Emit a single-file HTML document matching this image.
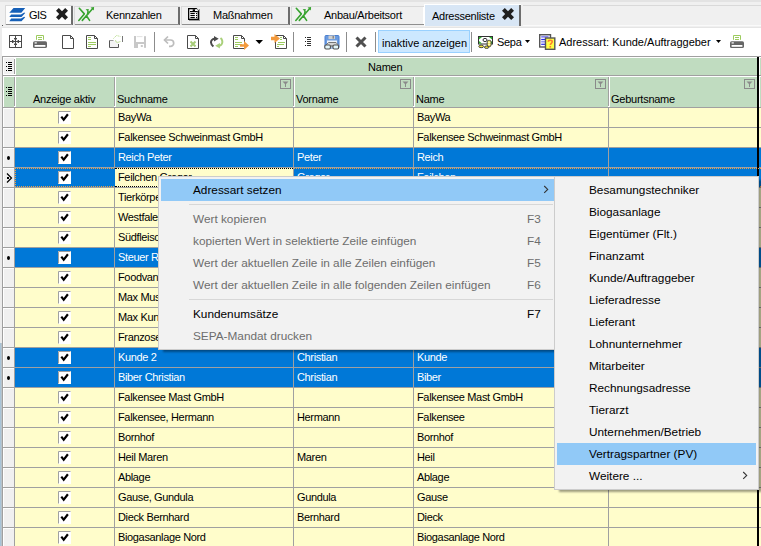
<!DOCTYPE html>
<html><head><meta charset="utf-8"><style>
html,body{margin:0;padding:0;width:761px;height:546px;overflow:hidden;background:#f0f0f0;position:relative}
.t{position:absolute;white-space:nowrap;font-family:'Liberation Sans', sans-serif;}
.r{position:absolute;}
</style></head><body>
<div class="r" style="left:0px;top:0px;width:761px;height:2px;background:#e3e3e3;"></div>
<div class="r" style="left:5px;top:5px;width:68px;height:20px;background:#fdfdfd;border-top:1px solid #d9d9d9;border-left:1px solid #d9d9d9;box-sizing:border-box"></div>
<div class="r" style="left:71px;top:6px;width:2px;height:19px;background:#6d6d6d;"></div>
<div class="r" style="left:6px;top:24px;width:66px;height:1px;background:#8f8f8f;"></div>
<div class="r" style="left:74px;top:6px;width:106px;height:19px;background:#f0f0f0;border-top:1px solid #d9d9d9;border-left:1px solid #d9d9d9;box-sizing:border-box"></div>
<div class="r" style="left:178px;top:7px;width:2px;height:18px;background:#6d6d6d;"></div>
<div class="r" style="left:75px;top:24px;width:104px;height:1px;background:#8f8f8f;"></div>
<div class="r" style="left:181px;top:6px;width:109px;height:19px;background:#f0f0f0;border-top:1px solid #d9d9d9;border-left:1px solid #d9d9d9;box-sizing:border-box"></div>
<div class="r" style="left:288px;top:7px;width:2px;height:18px;background:#6d6d6d;"></div>
<div class="r" style="left:182px;top:24px;width:107px;height:1px;background:#8f8f8f;"></div>
<div class="r" style="left:291px;top:6px;width:133px;height:19px;background:#f0f0f0;border-top:1px solid #d9d9d9;border-left:1px solid #d9d9d9;box-sizing:border-box"></div>
<div class="r" style="left:423px;top:7px;width:1px;height:18px;background:#ffffff;"></div>
<div class="r" style="left:292px;top:24px;width:132px;height:1px;background:#8f8f8f;"></div>
<div class="r" style="left:424px;top:4px;width:97px;height:22px;background:#d8e6f5;border-top:1px solid #ffffff;border-left:1px solid #ffffff;box-sizing:border-box"></div>
<div class="r" style="left:519px;top:5px;width:2px;height:21px;background:#6d6d6d;"></div>
<div class="r" style="left:523px;top:5px;width:238px;height:1px;background:#d9d9d9;"></div>
<div class="r" style="left:523px;top:25px;width:238px;height:1px;background:#fafafa;"></div>
<div class="t" style="left:29px;top:5px;font-size:11px;line-height:20px;color:#000;letter-spacing:-0.5px;">GIS</div>
<div class="t" style="left:106px;top:5px;font-size:11px;line-height:20px;color:#000;letter-spacing:-0.25px;">Kennzahlen</div>
<div class="t" style="left:213px;top:5px;font-size:11px;line-height:20px;color:#000;letter-spacing:-0.25px;">Maßnahmen</div>
<div class="t" style="left:324px;top:5px;font-size:11px;line-height:20px;color:#000;letter-spacing:-0.25px;">Anbau/Arbeitsort</div>
<div class="t" style="left:432px;top:6px;font-size:11px;line-height:20px;color:#000;letter-spacing:-0.25px;">Adressenliste</div>
<svg class="r" style="left:9px;top:8px" width="17" height="14" viewBox="0 0 17 14"><path d="M4.5,0 L16.2,0 L12.3,4.8 L0.3,4.8 Z" fill="#1660b8"/><path d="M2.2,6.4 L12,6.4 L15.2,4.5 L16.2,5 L12.5,9 L0.3,9 Z" fill="#1660b8"/><path d="M2.2,10.6 L12,10.6 L15.2,8.7 L16.2,9.2 L12.5,13.2 L0.3,13.2 Z" fill="#1660b8"/></svg>
<svg class="r" style="left:56px;top:8px" width="12" height="12" viewBox="0 0 12 12"><path d="M0,2.8 L2.8,0 L6,3.2 L9.2,0 L12,2.8 L8.8,6 L12,9.2 L9.2,12 L6,8.8 L2.8,12 L0,9.2 L3.2,6 Z" fill="#1e1e1e"/></svg>
<svg class="r" style="left:502px;top:8px" width="12" height="12" viewBox="0 0 12 12"><path d="M0,2.8 L2.8,0 L6,3.2 L9.2,0 L12,2.8 L8.8,6 L12,9.2 L9.2,12 L6,8.8 L2.8,12 L0,9.2 L3.2,6 Z" fill="#1e1e1e"/></svg>
<svg class="r" style="left:76px;top:5px" width="20" height="18" viewBox="0 0 20 18"><g stroke="#37a32f" stroke-width="1.6" fill="none" stroke-linecap="round" stroke-linejoin="round"><path d="M3.3,3.3 L8.3,8.9 L2.8,15.4"/><path d="M6.3,15.4 L10.4,10.7 L13.6,15.4"/><path d="M10.4,10.7 L16.3,4"/><path d="M11.6,9.2 L12,6.5"/></g><path d="M14.6,2.4 L18.1,2.1 L17.8,5.6 Z" fill="#37a32f"/><path d="M9.6,4.3 L12.8,4.1 L12.2,7.1 Z" fill="#37a32f"/></svg>
<svg class="r" style="left:293px;top:5px" width="20" height="18" viewBox="0 0 20 18"><g stroke="#37a32f" stroke-width="1.6" fill="none" stroke-linecap="round" stroke-linejoin="round"><path d="M3.3,3.3 L8.3,8.9 L2.8,15.4"/><path d="M6.3,15.4 L10.4,10.7 L13.6,15.4"/><path d="M10.4,10.7 L16.3,4"/><path d="M11.6,9.2 L12,6.5"/></g><path d="M14.6,2.4 L18.1,2.1 L17.8,5.6 Z" fill="#37a32f"/><path d="M9.6,4.3 L12.8,4.1 L12.2,7.1 Z" fill="#37a32f"/></svg>
<svg class="r" style="left:188px;top:8px" width="13" height="14" viewBox="0 0 13 14"><rect x="11" y="1" width="1" height="12" fill="#9a9a9a"/><rect x="1" y="12" width="11" height="1" fill="#9a9a9a"/><path d="M0,0 H8.5 L11,2.5 V12 H0 Z" fill="#000"/><rect x="1.3" y="1.3" width="8.4" height="9.4" fill="#fff"/><rect x="2" y="3" width="7.7" height="1.2" fill="#000"/><rect x="4.7" y="1.3" width="2.3" height="1.8" fill="#000"/><path d="M7.6,1.3 H8.5 L9.7,2.5 V3 H7.6 Z" fill="#fff"/><rect x="2.4" y="5" width="4.4" height="1.1" fill="#000"/><rect x="2.4" y="7" width="4.4" height="1.1" fill="#000"/><rect x="2.4" y="9" width="4.4" height="1.1" fill="#000"/><rect x="8" y="5" width="1.1" height="1.1" fill="#000"/><rect x="8" y="7" width="1.1" height="1.1" fill="#000"/><rect x="8" y="9" width="1.1" height="1.1" fill="#000"/></svg>
<div class="r" style="left:0px;top:26px;width:761px;height:1px;background:#f0f0f0;"></div>
<div class="r" style="left:2px;top:25px;width:1px;height:1px;background:#555;"></div>
<div class="r" style="left:2px;top:27px;width:759px;height:1px;background:#e5e5e5;"></div>
<div class="r" style="left:2px;top:28px;width:759px;height:28px;background:#ffffff;"></div>
<div class="r" style="left:154px;top:32px;width:1px;height:20px;background:#8c8c8c;"></div>
<div class="r" style="left:293px;top:32px;width:1px;height:20px;background:#8c8c8c;"></div>
<div class="r" style="left:346px;top:32px;width:1px;height:20px;background:#8c8c8c;"></div>
<div class="r" style="left:375px;top:32px;width:1px;height:20px;background:#8c8c8c;"></div>
<div class="r" style="left:471px;top:32px;width:1px;height:20px;background:#8c8c8c;"></div>
<svg class="r" style="left:9px;top:35px" width="13" height="13" viewBox="0 0 13 13"><g stroke="#4a4a4a" fill="none" stroke-width="1"><rect x="0.5" y="0.5" width="12" height="12"/><path d="M6.5,1 V12 M1,6.5 H12"/></g><g fill="#4a4a4a"><rect x="5" y="3" width="3" height="1.4"/><rect x="5" y="8.6" width="3" height="1.4"/><rect x="3" y="5" width="1.4" height="3"/><rect x="8.6" y="5" width="1.4" height="3"/></g></svg>
<svg class="r" style="left:33px;top:35px" width="15" height="14" viewBox="0 0 15 14"><path d="M3.5,4.8 V0.5 H10.5 V4.8" stroke="#9ccb5e" fill="none"/><path d="M5,2.5 H9 M5,4.5 H9" stroke="#9ccb5e"/><rect x="0" y="6.2" width="14" height="6.8" rx="1.6" fill="#666"/><rect x="1.6" y="10" width="10.8" height="1.8" fill="#fff"/><rect x="1.6" y="7.3" width="2.2" height="1.2" fill="#fff"/></svg>
<svg class="r" style="left:730px;top:35px" width="15" height="14" viewBox="0 0 15 14"><path d="M3.5,4.8 V0.5 H10.5 V4.8" stroke="#9ccb5e" fill="none"/><path d="M5,2.5 H9 M5,4.5 H9" stroke="#9ccb5e"/><rect x="0" y="6.2" width="14" height="6.8" rx="1.6" fill="#666"/><rect x="1.6" y="10" width="10.8" height="1.8" fill="#fff"/><rect x="1.6" y="7.3" width="2.2" height="1.2" fill="#fff"/></svg>
<svg class="r" style="left:62px;top:35px" width="13" height="15" viewBox="0 0 13 15"><path d="M0.5,0.5 H8.5 L11.5,3.5 V13.5 H0.5 Z M8.5,0.5 V3.5 H11.5" stroke="#4a4a4a" fill="#fff" stroke-width="1"/></svg>
<svg class="r" style="left:86px;top:35px" width="13" height="15" viewBox="0 0 13 15"><path d="M0.5,0.5 H8.5 L11.5,3.5 V13.5 H0.5 Z M8.5,0.5 V3.5 H11.5" stroke="#4a4a4a" fill="#fff" stroke-width="1"/><path d="M2,2.5 H5 M2,4.5 H5 M2,7.5 H10 M2,9.5 H10 M2,11.5 H5" stroke="#9ccb5e"/></svg>
<svg class="r" style="left:109px;top:35px" width="15" height="14" viewBox="0 0 15 14"><rect x="1" y="6" width="8.5" height="6.5" fill="#f3f3f3"/><path d="M0.5,5.5 H4.5" stroke="#9a9a9a"/><path d="M0.5,5.5 V12.5 H9.5 V9" stroke="#555" fill="none"/><path d="M4.5,3.5 L7.5,0.5 L11.5,1.5" stroke="#b6db88" fill="none" stroke-dasharray="1.2 0.8"/><path d="M6.5,5 Q6.5,7.5 8.5,7.5 L11.5,6.5" stroke="#c5e3a0" fill="none"/><path d="M13.5,1 V7" stroke="#777"/></svg>
<svg class="r" style="left:134px;top:36px" width="12" height="12" viewBox="0 0 12 12"><g fill="#c8c8c8"><rect x="0" y="0" width="2" height="12"/><rect x="10" y="0" width="2" height="12" rx="0.8"/><rect x="0" y="6" width="12" height="2"/><rect x="0" y="8" width="4" height="4"/><rect x="6.8" y="9" width="2" height="2"/></g><rect x="2.7" y="0.2" width="5.8" height="0.9" fill="#dedede"/></svg>
<svg class="r" style="left:163px;top:35px" width="13" height="13" viewBox="0 0 13 13"><path d="M1.5,5 H7.5 A3.2,3.2 0 0 1 7.5,11.4 H6" stroke="#bdbdbd" stroke-width="1.7" fill="none"/><path d="M5,1.5 L1.5,5 L5,8.5" stroke="#bdbdbd" stroke-width="1.7" fill="none"/></svg>
<svg class="r" style="left:187px;top:35px" width="13" height="15" viewBox="0 0 13 15"><path d="M0.5,0.5 H8.5 L11.5,3.5 V13.5 H0.5 Z M8.5,0.5 V3.5 H11.5" stroke="#4a4a4a" fill="#fff"/><path d="M3.5,6.5 L8.5,11.5 M8.5,6.5 L3.5,11.5" stroke="#a7cc78" stroke-width="2"/></svg>
<svg class="r" style="left:210px;top:35px" width="14" height="14" viewBox="0 0 14 14"><path d="M5,3.7 C2.5,3.7 0.9,5.5 1,7.5 C1.1,9.5 2.3,10.6 3.4,11.6" stroke="#4a4a4a" stroke-width="2" fill="none"/><path d="M4,1 L8.7,3.7 L4,6.5 Z" fill="#4a4a4a"/><path d="M10.5,3 C12.5,4.5 13,7.5 11.5,9.5 C11,10.2 10,10.7 9,10.7" stroke="#a9d07a" stroke-width="2" fill="none"/><path d="M9.9,8 L5.2,10.7 L9.9,13.5 Z" fill="#a9d07a"/></svg>
<svg class="r" style="left:233px;top:35px" width="17" height="16" viewBox="0 0 17 16"><path d="M0.5,0.5 H8.5 L11.5,3.5 V13.5 H0.5 Z M8.5,0.5 V3.5 H11.5" stroke="#4a4a4a" fill="#fff"/><path d="M2,2.5 H5 M2,4.5 H5 M2,7.5 H9 M2,9.5 H9 M2,11.5 H5" stroke="#9ccb5e"/><path d="M7,9.2 H11 V6 L16,10.5 L11,15 V11.8 H7 Z" fill="#f39a3c"/></svg>
<svg class="r" style="left:255px;top:40px" width="9" height="5" viewBox="0 0 9 5"><path d="M0.5,0 L8,0 L4.25,4 Z" fill="#000"/></svg>
<svg class="r" style="left:270px;top:33px" width="18" height="17" viewBox="0 0 18 17"><path d="M5.5,2.5 H13.5 L16.5,5.5 V15.5 H5.5 Z M13.5,2.5 V5.5 H16.5" stroke="#4a4a4a" fill="#fff"/><path d="M10,4.5 H12 M10,6.5 H12 M8,9.5 H15 M7,11.5 H14 M7,13.5 H9" stroke="#9ccb5e"/><path d="M1,3.8 H4.5 V1 L10,5.5 L4.5,10 V7.2 H1 Z" fill="#f39a3c"/></svg>
<svg class="r" style="left:305px;top:37px" width="7" height="10" viewBox="0 0 7 10"><path d="M0,0.5 H1 M0,4.5 H1 M0,8.5 H1" stroke="#222"/><path d="M2,0.5 H6 M2,2.5 H6 M2,4.5 H6 M2,6.5 H6 M2,8.5 H6" stroke="#333"/></svg>
<svg class="r" style="left:324px;top:35px" width="16" height="15" viewBox="0 0 16 15"><rect x="1" y="0.5" width="14" height="12.5" rx="1" fill="#6a9be0" stroke="#4a7fcf"/><rect x="4.5" y="0.5" width="6.5" height="3.6" fill="#cfcfcf"/><rect x="8.5" y="1" width="1.5" height="2.6" fill="#888"/><rect x="3" y="5.5" width="10" height="7" fill="#f0f4fa"/><path d="M1.5,10.5 L4.5,7.5 H12 L14.8,10.5" stroke="#777" fill="#d5d5d5"/><rect x="0.8" y="10" width="5.6" height="4" rx="1.2" fill="#e3f6fa" stroke="#505050" stroke-width="1.1"/><rect x="9" y="10" width="5.6" height="4" rx="1.2" fill="#e3f6fa" stroke="#505050" stroke-width="1.1"/><path d="M6.4,11 H9" stroke="#505050" stroke-width="1.1"/></svg>
<svg class="r" style="left:355px;top:36px" width="12" height="12" viewBox="0 0 12 12"><path d="M1.5,1.5 L10.5,10.5 M10.5,1.5 L1.5,10.5" stroke="#505050" stroke-width="3"/></svg>
<div class="r" style="left:378px;top:30px;width:92px;height:23px;background:#cce8ff;border:1px solid #99d1ff;box-sizing:border-box"></div>
<div class="t" style="left:382px;top:33px;font-size:11px;line-height:20px;color:#000;letter-spacing:0px;">inaktive anzeigen</div>
<svg class="r" style="left:477px;top:35px" width="17" height="14" viewBox="0 0 17 14"><rect x="1.5" y="1.5" width="14" height="7.5" fill="#fff" stroke="#333"/><path d="M2,2 H5 L2,4.5 Z M15,2 H12 L15,4.5 Z M2,8.5 H5 L2,6 Z M15,8.5 H12 L15,6 Z" fill="#2db52d"/><ellipse cx="8" cy="5" rx="2" ry="1.6" fill="#fff" stroke="#333"/><rect x="10.2" y="5.3" width="3.8" height="6.4" rx="1.6" fill="#f2e640" stroke="#333" stroke-width="0.9"/><path d="M10.8,7.3 H13.4 M10.8,9.3 H13.4" stroke="#fff" stroke-width="0.8"/><ellipse cx="4.2" cy="11.4" rx="2.4" ry="1.3" fill="#f2e640" stroke="#333" stroke-width="0.9"/><ellipse cx="9.6" cy="12.2" rx="2.2" ry="1.2" fill="#f2e640" stroke="#333" stroke-width="0.9"/></svg>
<div class="t" style="left:497px;top:32px;font-size:11px;line-height:20px;color:#000;letter-spacing:-0.3px;">Sepa</div>
<svg class="r" style="left:525px;top:40px" width="6" height="4" viewBox="0 0 6 4"><path d="M0,0 L5,0 L2.5,3 Z" fill="#000"/></svg>
<svg class="r" style="left:539px;top:34px" width="17" height="16" viewBox="0 0 17 16"><rect x="0.7" y="0.7" width="10.8" height="12.3" fill="#fafaff" stroke="#555" stroke-width="1.4"/><path d="M2.2,2.8 H9.5" stroke="#8888f0" stroke-width="1.8"/><path d="M2.2,5.5 H8" stroke="#2a2af0" stroke-width="1.2"/><path d="M2.2,7.8 H8" stroke="#8888f0" stroke-width="1.4"/><path d="M2.2,10.3 H8" stroke="#2a2af0" stroke-width="1.2"/><rect x="6.5" y="4" width="9.3" height="11.3" fill="#ffff44" stroke="#555" stroke-width="1.4"/><path d="M9.3,7.8 C9.3,5.8 13.2,5.8 13.2,7.8 C13.2,9.2 11.3,9.4 11.3,11" stroke="#ff7a30" stroke-width="1.6" fill="none"/><rect x="10.5" y="12" width="1.6" height="1.6" fill="#ff7a30"/></svg>
<div class="t" style="left:559px;top:32px;font-size:11px;line-height:20px;color:#000;letter-spacing:0px;">Adressart: Kunde/Auftraggeber</div>
<svg class="r" style="left:716px;top:40px" width="6" height="4" viewBox="0 0 6 4"><path d="M0,0 L5,0 L2.5,3 Z" fill="#000"/></svg>
<div class="r" style="left:0px;top:27px;width:2px;height:519px;background:#ececec;"></div>
<div class="r" style="left:0px;top:343px;width:1px;height:203px;background:#a8c4d8;"></div>
<div class="r" style="left:1px;top:343px;width:1px;height:203px;background:#b9c3ca;"></div>
<div class="r" style="left:2px;top:56px;width:759px;height:490px;background:#a0a0a0;"></div>
<div class="r" style="left:3px;top:57px;width:758px;height:1px;background:#fff;"></div>
<div class="r" style="left:3px;top:58px;width:1px;height:17px;background:#fff;"></div>
<div class="r" style="left:4px;top:58px;width:10px;height:16px;background:#f0f0f0;"></div>
<div class="r" style="left:4px;top:74px;width:11px;height:1px;background:#fff;"></div>
<div class="r" style="left:14px;top:58px;width:1px;height:1px;background:#fff;"></div>
<div class="r" style="left:14px;top:59px;width:1px;height:15px;background:#a0a0a0;"></div>
<div class="r" style="left:15px;top:58px;width:1px;height:17px;background:#fff;"></div>
<div class="r" style="left:16px;top:58px;width:741px;height:17px;background:#c0dcc0;"></div>
<div class="r" style="left:759px;top:58px;width:2px;height:17px;background:#c0dcc0;border-left:1px solid #fff;box-sizing:border-box"></div>
<div class="t" style="left:368px;top:57px;font-size:11px;line-height:20px;color:#000;letter-spacing:-0.2px;">Namen</div>
<svg class="r" style="left:6px;top:62px" width="7" height="9" viewBox="0 0 7 9"><path d="M0,0.5 H1 M0,4.5 H1 M0,8.5 H1" stroke="#000"/><path d="M2,0.5 H6 M2,2.5 H6 M2,4.5 H6 M2,6.5 H6 M2,8.5 H6" stroke="#000"/></svg>
<div class="r" style="left:3px;top:76px;width:758px;height:1px;background:#fff;"></div>
<div class="r" style="left:3px;top:77px;width:1px;height:30px;background:#fff;"></div>
<div class="r" style="left:4px;top:77px;width:10px;height:30px;background:#c0dcc0;"></div>
<div class="r" style="left:15px;top:77px;width:1px;height:30px;background:#fff;"></div>
<div class="r" style="left:16px;top:77px;width:98px;height:30px;background:#c0dcc0;"></div>
<div class="r" style="left:115px;top:77px;width:1px;height:30px;background:#fff;"></div>
<div class="r" style="left:116px;top:77px;width:177px;height:30px;background:#c0dcc0;"></div>
<div class="r" style="left:294px;top:77px;width:1px;height:30px;background:#fff;"></div>
<div class="r" style="left:295px;top:77px;width:118px;height:30px;background:#c0dcc0;"></div>
<div class="r" style="left:414px;top:77px;width:1px;height:30px;background:#fff;"></div>
<div class="r" style="left:415px;top:77px;width:193px;height:30px;background:#c0dcc0;"></div>
<div class="r" style="left:609px;top:77px;width:1px;height:30px;background:#fff;"></div>
<div class="r" style="left:610px;top:77px;width:147px;height:30px;background:#c0dcc0;"></div>
<div class="r" style="left:757px;top:57px;width:2px;height:489px;background:#000;"></div>
<div class="r" style="left:759px;top:77px;width:1px;height:30px;background:#fff;"></div>
<div class="r" style="left:760px;top:77px;width:1px;height:30px;background:#c0dcc0;"></div>
<svg class="r" style="left:6px;top:87px" width="7" height="9" viewBox="0 0 7 9"><path d="M0,0.5 H1 M0,4.5 H1 M0,8.5 H1" stroke="#000"/><path d="M2,0.5 H6 M2,2.5 H6 M2,4.5 H6 M2,6.5 H6 M2,8.5 H6" stroke="#000"/></svg>
<div class="r" style="left:14px;top:106px;width:1px;height:1px;background:#fff;"></div>
<div class="r" style="left:114px;top:106px;width:1px;height:1px;background:#fff;"></div>
<div class="r" style="left:293px;top:106px;width:1px;height:1px;background:#fff;"></div>
<div class="r" style="left:413px;top:106px;width:1px;height:1px;background:#fff;"></div>
<div class="r" style="left:608px;top:106px;width:1px;height:1px;background:#fff;"></div>
<div class="t" style="left:33px;top:89px;font-size:11px;line-height:20px;color:#000;letter-spacing:-0.25px;">Anzeige aktiv</div>
<div class="t" style="left:117px;top:89px;font-size:11px;line-height:20px;color:#000;letter-spacing:-0.25px;">Suchname</div>
<div class="t" style="left:296px;top:89px;font-size:11px;line-height:20px;color:#000;letter-spacing:-0.25px;">Vorname</div>
<div class="t" style="left:416px;top:89px;font-size:11px;line-height:20px;color:#000;letter-spacing:-0.25px;">Name</div>
<div class="t" style="left:611px;top:89px;font-size:11px;line-height:20px;color:#000;letter-spacing:-0.25px;">Geburtsname</div>
<svg class="r" style="left:280px;top:79px" width="11" height="10" viewBox="0 0 11 10"><rect x="0.5" y="0.5" width="10" height="9" fill="none" stroke="#8a8a8a"/><path d="M2.5,2.5 H8.5 L6,5 V8 H5 V5 Z" fill="#8a8a8a"/></svg>
<svg class="r" style="left:400px;top:79px" width="11" height="10" viewBox="0 0 11 10"><rect x="0.5" y="0.5" width="10" height="9" fill="none" stroke="#8a8a8a"/><path d="M2.5,2.5 H8.5 L6,5 V8 H5 V5 Z" fill="#8a8a8a"/></svg>
<svg class="r" style="left:595px;top:79px" width="11" height="10" viewBox="0 0 11 10"><rect x="0.5" y="0.5" width="10" height="9" fill="none" stroke="#8a8a8a"/><path d="M2.5,2.5 H8.5 L6,5 V8 H5 V5 Z" fill="#8a8a8a"/></svg>
<svg class="r" style="left:744px;top:79px" width="11" height="10" viewBox="0 0 11 10"><rect x="0.5" y="0.5" width="10" height="9" fill="none" stroke="#8a8a8a"/><path d="M2.5,2.5 H8.5 L6,5 V8 H5 V5 Z" fill="#8a8a8a"/></svg>
<div class="r" style="left:3px;top:108px;width:1px;height:19px;background:#fff;"></div>
<div class="r" style="left:4px;top:108px;width:10px;height:19px;background:#f0f0f0;"></div>
<div class="r" style="left:4px;top:108px;width:10px;height:1px;background:#fff;"></div>
<div class="r" style="left:15px;top:108px;width:99px;height:19px;background:#fffdcb;"></div>
<div class="r" style="left:115px;top:108px;width:178px;height:19px;background:#fffdcb;"></div>
<div class="r" style="left:294px;top:108px;width:119px;height:19px;background:#fffdcb;"></div>
<div class="r" style="left:414px;top:108px;width:194px;height:19px;background:#fffdcb;"></div>
<div class="r" style="left:609px;top:108px;width:148px;height:19px;background:#fffdcb;"></div>
<div class="r" style="left:759px;top:108px;width:2px;height:19px;background:#fffdcb;"></div>
<svg class="r" style="left:58px;top:111px" width="13" height="13" viewBox="0 0 13 13"><rect x="0" y="0" width="13" height="13" fill="#fff"/><path d="M0.5,12.5 V0.5 H12.5" stroke="#a0a0a0" fill="none"/><path d="M3.3,5.6 L5.7,8.7 L9.9,3.3" stroke="#000" stroke-width="2.2" fill="none"/></svg>
<div class="t" style="left:118px;top:107px;font-size:11px;line-height:20px;color:#000;letter-spacing:-0.35px;">BayWa</div>
<div class="t" style="left:297px;top:107px;font-size:11px;line-height:20px;color:#000;letter-spacing:-0.35px;"></div>
<div class="t" style="left:417px;top:107px;font-size:11px;line-height:20px;color:#000;letter-spacing:-0.35px;">BayWa</div>
<div class="r" style="left:3px;top:128px;width:1px;height:19px;background:#fff;"></div>
<div class="r" style="left:4px;top:128px;width:10px;height:19px;background:#f0f0f0;"></div>
<div class="r" style="left:4px;top:128px;width:10px;height:1px;background:#fff;"></div>
<div class="r" style="left:15px;top:128px;width:99px;height:19px;background:#fffdcb;"></div>
<div class="r" style="left:115px;top:128px;width:178px;height:19px;background:#fffdcb;"></div>
<div class="r" style="left:294px;top:128px;width:119px;height:19px;background:#fffdcb;"></div>
<div class="r" style="left:414px;top:128px;width:194px;height:19px;background:#fffdcb;"></div>
<div class="r" style="left:609px;top:128px;width:148px;height:19px;background:#fffdcb;"></div>
<div class="r" style="left:759px;top:128px;width:2px;height:19px;background:#fffdcb;"></div>
<svg class="r" style="left:58px;top:131px" width="13" height="13" viewBox="0 0 13 13"><rect x="0" y="0" width="13" height="13" fill="#fff"/><path d="M0.5,12.5 V0.5 H12.5" stroke="#a0a0a0" fill="none"/><path d="M3.3,5.6 L5.7,8.7 L9.9,3.3" stroke="#000" stroke-width="2.2" fill="none"/></svg>
<div class="t" style="left:118px;top:127px;font-size:11px;line-height:20px;color:#000;letter-spacing:-0.35px;">Falkensee Schweinmast GmbH</div>
<div class="t" style="left:297px;top:127px;font-size:11px;line-height:20px;color:#000;letter-spacing:-0.35px;"></div>
<div class="t" style="left:417px;top:127px;font-size:11px;line-height:20px;color:#000;letter-spacing:-0.35px;">Falkensee Schweinmast GmbH</div>
<div class="r" style="left:3px;top:148px;width:1px;height:19px;background:#fff;"></div>
<div class="r" style="left:4px;top:148px;width:10px;height:19px;background:#f0f0f0;"></div>
<div class="r" style="left:4px;top:148px;width:10px;height:1px;background:#fff;"></div>
<div class="r" style="left:15px;top:148px;width:99px;height:19px;background:#0078d7;"></div>
<div class="r" style="left:115px;top:148px;width:178px;height:19px;background:#0078d7;"></div>
<div class="r" style="left:294px;top:148px;width:119px;height:19px;background:#0078d7;"></div>
<div class="r" style="left:414px;top:148px;width:194px;height:19px;background:#0078d7;"></div>
<div class="r" style="left:609px;top:148px;width:148px;height:19px;background:#0078d7;"></div>
<div class="r" style="left:759px;top:148px;width:2px;height:19px;background:#0078d7;"></div>
<svg class="r" style="left:58px;top:151px" width="13" height="13" viewBox="0 0 13 13"><rect x="0" y="0" width="13" height="13" fill="#fff"/><path d="M0.5,12.5 V0.5 H12.5" stroke="#a0a0a0" fill="none"/><path d="M3.3,5.6 L5.7,8.7 L9.9,3.3" stroke="#000" stroke-width="2.2" fill="none"/></svg>
<div class="t" style="left:118px;top:147px;font-size:11px;line-height:20px;color:#fff;letter-spacing:-0.35px;">Reich Peter</div>
<div class="t" style="left:297px;top:147px;font-size:11px;line-height:20px;color:#fff;letter-spacing:-0.35px;">Peter</div>
<div class="t" style="left:417px;top:147px;font-size:11px;line-height:20px;color:#fff;letter-spacing:-0.35px;">Reich</div>
<svg class="r" style="left:7px;top:155px" width="3" height="6" viewBox="0 0 3 6"><ellipse cx="1.5" cy="3" rx="1.5" ry="2.1" fill="#000"/></svg>
<div class="r" style="left:3px;top:168px;width:1px;height:19px;background:#fff;"></div>
<div class="r" style="left:4px;top:168px;width:10px;height:19px;background:#f0f0f0;"></div>
<div class="r" style="left:4px;top:168px;width:10px;height:1px;background:#fff;"></div>
<div class="r" style="left:15px;top:168px;width:99px;height:19px;background:#0078d7;"></div>
<div class="r" style="left:115px;top:168px;width:178px;height:19px;background:#fffdcb;"></div>
<div class="r" style="left:294px;top:168px;width:119px;height:19px;background:#0078d7;"></div>
<div class="r" style="left:414px;top:168px;width:194px;height:19px;background:#0078d7;"></div>
<div class="r" style="left:609px;top:168px;width:148px;height:19px;background:#0078d7;"></div>
<div class="r" style="left:759px;top:168px;width:2px;height:19px;background:#0078d7;"></div>
<div class="r" style="left:114px;top:168px;width:1px;height:19px;background:#0078d7;"></div>
<div class="r" style="left:15px;top:168px;width:99px;height:19px;border-top:1px dotted #f0a040;border-bottom:1px dotted #f0a040;border-left:1px dotted #f0a040;box-sizing:border-box"></div>
<div class="r" style="left:115px;top:168px;width:178px;height:19px;border-top:1px dotted #000;border-bottom:1px dotted #000;box-sizing:border-box"></div>
<div class="r" style="left:294px;top:168px;width:467px;height:19px;border-top:1px dotted #f0a040;border-bottom:1px dotted #f0a040;box-sizing:border-box"></div>
<svg class="r" style="left:58px;top:171px" width="13" height="13" viewBox="0 0 13 13"><rect x="0" y="0" width="13" height="13" fill="#fff"/><path d="M0.5,12.5 V0.5 H12.5" stroke="#a0a0a0" fill="none"/><path d="M3.3,5.6 L5.7,8.7 L9.9,3.3" stroke="#000" stroke-width="2.2" fill="none"/></svg>
<div class="t" style="left:118px;top:167px;font-size:11px;line-height:20px;color:#000;letter-spacing:-0.35px;">Feilchen Gregor</div>
<div class="t" style="left:297px;top:167px;font-size:11px;line-height:20px;color:#fff;letter-spacing:-0.35px;">Gregor</div>
<div class="t" style="left:417px;top:167px;font-size:11px;line-height:20px;color:#fff;letter-spacing:-0.35px;">Feilchen</div>
<svg class="r" style="left:6px;top:173px" width="7" height="10" viewBox="0 0 7 10"><path d="M1,0.5 L5.5,5 L1,9.5" stroke="#000" fill="none" stroke-width="1.2"/><rect x="1" y="4" width="2" height="2" fill="#000"/></svg>
<div class="r" style="left:3px;top:188px;width:1px;height:19px;background:#fff;"></div>
<div class="r" style="left:4px;top:188px;width:10px;height:19px;background:#f0f0f0;"></div>
<div class="r" style="left:4px;top:188px;width:10px;height:1px;background:#fff;"></div>
<div class="r" style="left:15px;top:188px;width:99px;height:19px;background:#fffdcb;"></div>
<div class="r" style="left:115px;top:188px;width:178px;height:19px;background:#fffdcb;"></div>
<div class="r" style="left:294px;top:188px;width:119px;height:19px;background:#fffdcb;"></div>
<div class="r" style="left:414px;top:188px;width:194px;height:19px;background:#fffdcb;"></div>
<div class="r" style="left:609px;top:188px;width:148px;height:19px;background:#fffdcb;"></div>
<div class="r" style="left:759px;top:188px;width:2px;height:19px;background:#fffdcb;"></div>
<svg class="r" style="left:58px;top:191px" width="13" height="13" viewBox="0 0 13 13"><rect x="0" y="0" width="13" height="13" fill="#fff"/><path d="M0.5,12.5 V0.5 H12.5" stroke="#a0a0a0" fill="none"/><path d="M3.3,5.6 L5.7,8.7 L9.9,3.3" stroke="#000" stroke-width="2.2" fill="none"/></svg>
<div class="t" style="left:118px;top:187px;font-size:11px;line-height:20px;color:#000;letter-spacing:-0.35px;">Tierkörperbeseitigung</div>
<div class="t" style="left:297px;top:187px;font-size:11px;line-height:20px;color:#000;letter-spacing:-0.35px;"></div>
<div class="t" style="left:417px;top:187px;font-size:11px;line-height:20px;color:#000;letter-spacing:-0.35px;">Tierkörperbeseitigung</div>
<div class="r" style="left:3px;top:208px;width:1px;height:19px;background:#fff;"></div>
<div class="r" style="left:4px;top:208px;width:10px;height:19px;background:#f0f0f0;"></div>
<div class="r" style="left:4px;top:208px;width:10px;height:1px;background:#fff;"></div>
<div class="r" style="left:15px;top:208px;width:99px;height:19px;background:#fffdcb;"></div>
<div class="r" style="left:115px;top:208px;width:178px;height:19px;background:#fffdcb;"></div>
<div class="r" style="left:294px;top:208px;width:119px;height:19px;background:#fffdcb;"></div>
<div class="r" style="left:414px;top:208px;width:194px;height:19px;background:#fffdcb;"></div>
<div class="r" style="left:609px;top:208px;width:148px;height:19px;background:#fffdcb;"></div>
<div class="r" style="left:759px;top:208px;width:2px;height:19px;background:#fffdcb;"></div>
<svg class="r" style="left:58px;top:211px" width="13" height="13" viewBox="0 0 13 13"><rect x="0" y="0" width="13" height="13" fill="#fff"/><path d="M0.5,12.5 V0.5 H12.5" stroke="#a0a0a0" fill="none"/><path d="M3.3,5.6 L5.7,8.7 L9.9,3.3" stroke="#000" stroke-width="2.2" fill="none"/></svg>
<div class="t" style="left:118px;top:207px;font-size:11px;line-height:20px;color:#000;letter-spacing:-0.35px;">Westfalenfleisch</div>
<div class="t" style="left:297px;top:207px;font-size:11px;line-height:20px;color:#000;letter-spacing:-0.35px;"></div>
<div class="t" style="left:417px;top:207px;font-size:11px;line-height:20px;color:#000;letter-spacing:-0.35px;">Westfalenfleisch</div>
<div class="r" style="left:3px;top:228px;width:1px;height:19px;background:#fff;"></div>
<div class="r" style="left:4px;top:228px;width:10px;height:19px;background:#f0f0f0;"></div>
<div class="r" style="left:4px;top:228px;width:10px;height:1px;background:#fff;"></div>
<div class="r" style="left:15px;top:228px;width:99px;height:19px;background:#fffdcb;"></div>
<div class="r" style="left:115px;top:228px;width:178px;height:19px;background:#fffdcb;"></div>
<div class="r" style="left:294px;top:228px;width:119px;height:19px;background:#fffdcb;"></div>
<div class="r" style="left:414px;top:228px;width:194px;height:19px;background:#fffdcb;"></div>
<div class="r" style="left:609px;top:228px;width:148px;height:19px;background:#fffdcb;"></div>
<div class="r" style="left:759px;top:228px;width:2px;height:19px;background:#fffdcb;"></div>
<svg class="r" style="left:58px;top:231px" width="13" height="13" viewBox="0 0 13 13"><rect x="0" y="0" width="13" height="13" fill="#fff"/><path d="M0.5,12.5 V0.5 H12.5" stroke="#a0a0a0" fill="none"/><path d="M3.3,5.6 L5.7,8.7 L9.9,3.3" stroke="#000" stroke-width="2.2" fill="none"/></svg>
<div class="t" style="left:118px;top:227px;font-size:11px;line-height:20px;color:#000;letter-spacing:-0.35px;">Südfleisch</div>
<div class="t" style="left:297px;top:227px;font-size:11px;line-height:20px;color:#000;letter-spacing:-0.35px;"></div>
<div class="t" style="left:417px;top:227px;font-size:11px;line-height:20px;color:#000;letter-spacing:-0.35px;">Südfleisch</div>
<div class="r" style="left:3px;top:248px;width:1px;height:19px;background:#fff;"></div>
<div class="r" style="left:4px;top:248px;width:10px;height:19px;background:#f0f0f0;"></div>
<div class="r" style="left:4px;top:248px;width:10px;height:1px;background:#fff;"></div>
<div class="r" style="left:15px;top:248px;width:99px;height:19px;background:#0078d7;"></div>
<div class="r" style="left:115px;top:248px;width:178px;height:19px;background:#0078d7;"></div>
<div class="r" style="left:294px;top:248px;width:119px;height:19px;background:#0078d7;"></div>
<div class="r" style="left:414px;top:248px;width:194px;height:19px;background:#0078d7;"></div>
<div class="r" style="left:609px;top:248px;width:148px;height:19px;background:#0078d7;"></div>
<div class="r" style="left:759px;top:248px;width:2px;height:19px;background:#0078d7;"></div>
<svg class="r" style="left:58px;top:251px" width="13" height="13" viewBox="0 0 13 13"><rect x="0" y="0" width="13" height="13" fill="#fff"/><path d="M0.5,12.5 V0.5 H12.5" stroke="#a0a0a0" fill="none"/><path d="M3.3,5.6 L5.7,8.7 L9.9,3.3" stroke="#000" stroke-width="2.2" fill="none"/></svg>
<div class="t" style="left:118px;top:247px;font-size:11px;line-height:20px;color:#fff;letter-spacing:-0.35px;">Steuer Reinhard</div>
<div class="t" style="left:297px;top:247px;font-size:11px;line-height:20px;color:#fff;letter-spacing:-0.35px;">Reinhard</div>
<div class="t" style="left:417px;top:247px;font-size:11px;line-height:20px;color:#fff;letter-spacing:-0.35px;">Steuer</div>
<svg class="r" style="left:7px;top:255px" width="3" height="6" viewBox="0 0 3 6"><ellipse cx="1.5" cy="3" rx="1.5" ry="2.1" fill="#000"/></svg>
<div class="r" style="left:3px;top:268px;width:1px;height:19px;background:#fff;"></div>
<div class="r" style="left:4px;top:268px;width:10px;height:19px;background:#f0f0f0;"></div>
<div class="r" style="left:4px;top:268px;width:10px;height:1px;background:#fff;"></div>
<div class="r" style="left:15px;top:268px;width:99px;height:19px;background:#fffdcb;"></div>
<div class="r" style="left:115px;top:268px;width:178px;height:19px;background:#fffdcb;"></div>
<div class="r" style="left:294px;top:268px;width:119px;height:19px;background:#fffdcb;"></div>
<div class="r" style="left:414px;top:268px;width:194px;height:19px;background:#fffdcb;"></div>
<div class="r" style="left:609px;top:268px;width:148px;height:19px;background:#fffdcb;"></div>
<div class="r" style="left:759px;top:268px;width:2px;height:19px;background:#fffdcb;"></div>
<svg class="r" style="left:58px;top:271px" width="13" height="13" viewBox="0 0 13 13"><rect x="0" y="0" width="13" height="13" fill="#fff"/><path d="M0.5,12.5 V0.5 H12.5" stroke="#a0a0a0" fill="none"/><path d="M3.3,5.6 L5.7,8.7 L9.9,3.3" stroke="#000" stroke-width="2.2" fill="none"/></svg>
<div class="t" style="left:118px;top:267px;font-size:11px;line-height:20px;color:#000;letter-spacing:-0.35px;">Foodvantage</div>
<div class="t" style="left:297px;top:267px;font-size:11px;line-height:20px;color:#000;letter-spacing:-0.35px;"></div>
<div class="t" style="left:417px;top:267px;font-size:11px;line-height:20px;color:#000;letter-spacing:-0.35px;">Foodvantage</div>
<div class="r" style="left:3px;top:288px;width:1px;height:19px;background:#fff;"></div>
<div class="r" style="left:4px;top:288px;width:10px;height:19px;background:#f0f0f0;"></div>
<div class="r" style="left:4px;top:288px;width:10px;height:1px;background:#fff;"></div>
<div class="r" style="left:15px;top:288px;width:99px;height:19px;background:#fffdcb;"></div>
<div class="r" style="left:115px;top:288px;width:178px;height:19px;background:#fffdcb;"></div>
<div class="r" style="left:294px;top:288px;width:119px;height:19px;background:#fffdcb;"></div>
<div class="r" style="left:414px;top:288px;width:194px;height:19px;background:#fffdcb;"></div>
<div class="r" style="left:609px;top:288px;width:148px;height:19px;background:#fffdcb;"></div>
<div class="r" style="left:759px;top:288px;width:2px;height:19px;background:#fffdcb;"></div>
<svg class="r" style="left:58px;top:291px" width="13" height="13" viewBox="0 0 13 13"><rect x="0" y="0" width="13" height="13" fill="#fff"/><path d="M0.5,12.5 V0.5 H12.5" stroke="#a0a0a0" fill="none"/><path d="M3.3,5.6 L5.7,8.7 L9.9,3.3" stroke="#000" stroke-width="2.2" fill="none"/></svg>
<div class="t" style="left:118px;top:287px;font-size:11px;line-height:20px;color:#000;letter-spacing:-0.35px;">Max Mustermann</div>
<div class="t" style="left:297px;top:287px;font-size:11px;line-height:20px;color:#000;letter-spacing:-0.35px;">Max</div>
<div class="t" style="left:417px;top:287px;font-size:11px;line-height:20px;color:#000;letter-spacing:-0.35px;">Mustermann</div>
<div class="r" style="left:3px;top:308px;width:1px;height:19px;background:#fff;"></div>
<div class="r" style="left:4px;top:308px;width:10px;height:19px;background:#f0f0f0;"></div>
<div class="r" style="left:4px;top:308px;width:10px;height:1px;background:#fff;"></div>
<div class="r" style="left:15px;top:308px;width:99px;height:19px;background:#fffdcb;"></div>
<div class="r" style="left:115px;top:308px;width:178px;height:19px;background:#fffdcb;"></div>
<div class="r" style="left:294px;top:308px;width:119px;height:19px;background:#fffdcb;"></div>
<div class="r" style="left:414px;top:308px;width:194px;height:19px;background:#fffdcb;"></div>
<div class="r" style="left:609px;top:308px;width:148px;height:19px;background:#fffdcb;"></div>
<div class="r" style="left:759px;top:308px;width:2px;height:19px;background:#fffdcb;"></div>
<svg class="r" style="left:58px;top:311px" width="13" height="13" viewBox="0 0 13 13"><rect x="0" y="0" width="13" height="13" fill="#fff"/><path d="M0.5,12.5 V0.5 H12.5" stroke="#a0a0a0" fill="none"/><path d="M3.3,5.6 L5.7,8.7 L9.9,3.3" stroke="#000" stroke-width="2.2" fill="none"/></svg>
<div class="t" style="left:118px;top:307px;font-size:11px;line-height:20px;color:#000;letter-spacing:-0.35px;">Max Kunde</div>
<div class="t" style="left:297px;top:307px;font-size:11px;line-height:20px;color:#000;letter-spacing:-0.35px;">Max</div>
<div class="t" style="left:417px;top:307px;font-size:11px;line-height:20px;color:#000;letter-spacing:-0.35px;">Kunde</div>
<div class="r" style="left:3px;top:328px;width:1px;height:19px;background:#fff;"></div>
<div class="r" style="left:4px;top:328px;width:10px;height:19px;background:#f0f0f0;"></div>
<div class="r" style="left:4px;top:328px;width:10px;height:1px;background:#fff;"></div>
<div class="r" style="left:15px;top:328px;width:99px;height:19px;background:#fffdcb;"></div>
<div class="r" style="left:115px;top:328px;width:178px;height:19px;background:#fffdcb;"></div>
<div class="r" style="left:294px;top:328px;width:119px;height:19px;background:#fffdcb;"></div>
<div class="r" style="left:414px;top:328px;width:194px;height:19px;background:#fffdcb;"></div>
<div class="r" style="left:609px;top:328px;width:148px;height:19px;background:#fffdcb;"></div>
<div class="r" style="left:759px;top:328px;width:2px;height:19px;background:#fffdcb;"></div>
<svg class="r" style="left:58px;top:331px" width="13" height="13" viewBox="0 0 13 13"><rect x="0" y="0" width="13" height="13" fill="#fff"/><path d="M0.5,12.5 V0.5 H12.5" stroke="#a0a0a0" fill="none"/><path d="M3.3,5.6 L5.7,8.7 L9.9,3.3" stroke="#000" stroke-width="2.2" fill="none"/></svg>
<div class="t" style="left:118px;top:327px;font-size:11px;line-height:20px;color:#000;letter-spacing:-0.35px;">Franzosen</div>
<div class="t" style="left:297px;top:327px;font-size:11px;line-height:20px;color:#000;letter-spacing:-0.35px;"></div>
<div class="t" style="left:417px;top:327px;font-size:11px;line-height:20px;color:#000;letter-spacing:-0.35px;">Franzosen</div>
<div class="r" style="left:3px;top:348px;width:1px;height:19px;background:#fff;"></div>
<div class="r" style="left:4px;top:348px;width:10px;height:19px;background:#f0f0f0;"></div>
<div class="r" style="left:4px;top:348px;width:10px;height:1px;background:#fff;"></div>
<div class="r" style="left:15px;top:348px;width:99px;height:19px;background:#0078d7;"></div>
<div class="r" style="left:115px;top:348px;width:178px;height:19px;background:#0078d7;"></div>
<div class="r" style="left:294px;top:348px;width:119px;height:19px;background:#0078d7;"></div>
<div class="r" style="left:414px;top:348px;width:194px;height:19px;background:#0078d7;"></div>
<div class="r" style="left:609px;top:348px;width:148px;height:19px;background:#0078d7;"></div>
<div class="r" style="left:759px;top:348px;width:2px;height:19px;background:#0078d7;"></div>
<svg class="r" style="left:58px;top:351px" width="13" height="13" viewBox="0 0 13 13"><rect x="0" y="0" width="13" height="13" fill="#fff"/><path d="M0.5,12.5 V0.5 H12.5" stroke="#a0a0a0" fill="none"/><path d="M3.3,5.6 L5.7,8.7 L9.9,3.3" stroke="#000" stroke-width="2.2" fill="none"/></svg>
<div class="t" style="left:118px;top:347px;font-size:11px;line-height:20px;color:#fff;letter-spacing:-0.35px;">Kunde 2</div>
<div class="t" style="left:297px;top:347px;font-size:11px;line-height:20px;color:#fff;letter-spacing:-0.35px;">Christian</div>
<div class="t" style="left:417px;top:347px;font-size:11px;line-height:20px;color:#fff;letter-spacing:-0.35px;">Kunde</div>
<svg class="r" style="left:7px;top:355px" width="3" height="6" viewBox="0 0 3 6"><ellipse cx="1.5" cy="3" rx="1.5" ry="2.1" fill="#000"/></svg>
<div class="r" style="left:3px;top:368px;width:1px;height:19px;background:#fff;"></div>
<div class="r" style="left:4px;top:368px;width:10px;height:19px;background:#f0f0f0;"></div>
<div class="r" style="left:4px;top:368px;width:10px;height:1px;background:#fff;"></div>
<div class="r" style="left:15px;top:368px;width:99px;height:19px;background:#0078d7;"></div>
<div class="r" style="left:115px;top:368px;width:178px;height:19px;background:#0078d7;"></div>
<div class="r" style="left:294px;top:368px;width:119px;height:19px;background:#0078d7;"></div>
<div class="r" style="left:414px;top:368px;width:194px;height:19px;background:#0078d7;"></div>
<div class="r" style="left:609px;top:368px;width:148px;height:19px;background:#0078d7;"></div>
<div class="r" style="left:759px;top:368px;width:2px;height:19px;background:#0078d7;"></div>
<svg class="r" style="left:58px;top:371px" width="13" height="13" viewBox="0 0 13 13"><rect x="0" y="0" width="13" height="13" fill="#fff"/><path d="M0.5,12.5 V0.5 H12.5" stroke="#a0a0a0" fill="none"/><path d="M3.3,5.6 L5.7,8.7 L9.9,3.3" stroke="#000" stroke-width="2.2" fill="none"/></svg>
<div class="t" style="left:118px;top:367px;font-size:11px;line-height:20px;color:#fff;letter-spacing:-0.35px;">Biber Christian</div>
<div class="t" style="left:297px;top:367px;font-size:11px;line-height:20px;color:#fff;letter-spacing:-0.35px;">Christian</div>
<div class="t" style="left:417px;top:367px;font-size:11px;line-height:20px;color:#fff;letter-spacing:-0.35px;">Biber</div>
<svg class="r" style="left:7px;top:375px" width="3" height="6" viewBox="0 0 3 6"><ellipse cx="1.5" cy="3" rx="1.5" ry="2.1" fill="#000"/></svg>
<div class="r" style="left:3px;top:388px;width:1px;height:19px;background:#fff;"></div>
<div class="r" style="left:4px;top:388px;width:10px;height:19px;background:#f0f0f0;"></div>
<div class="r" style="left:4px;top:388px;width:10px;height:1px;background:#fff;"></div>
<div class="r" style="left:15px;top:388px;width:99px;height:19px;background:#fffdcb;"></div>
<div class="r" style="left:115px;top:388px;width:178px;height:19px;background:#fffdcb;"></div>
<div class="r" style="left:294px;top:388px;width:119px;height:19px;background:#fffdcb;"></div>
<div class="r" style="left:414px;top:388px;width:194px;height:19px;background:#fffdcb;"></div>
<div class="r" style="left:609px;top:388px;width:148px;height:19px;background:#fffdcb;"></div>
<div class="r" style="left:759px;top:388px;width:2px;height:19px;background:#fffdcb;"></div>
<svg class="r" style="left:58px;top:391px" width="13" height="13" viewBox="0 0 13 13"><rect x="0" y="0" width="13" height="13" fill="#fff"/><path d="M0.5,12.5 V0.5 H12.5" stroke="#a0a0a0" fill="none"/><path d="M3.3,5.6 L5.7,8.7 L9.9,3.3" stroke="#000" stroke-width="2.2" fill="none"/></svg>
<div class="t" style="left:118px;top:387px;font-size:11px;line-height:20px;color:#000;letter-spacing:-0.35px;">Falkensee Mast GmbH</div>
<div class="t" style="left:297px;top:387px;font-size:11px;line-height:20px;color:#000;letter-spacing:-0.35px;"></div>
<div class="t" style="left:417px;top:387px;font-size:11px;line-height:20px;color:#000;letter-spacing:-0.35px;">Falkensee Mast GmbH</div>
<div class="r" style="left:3px;top:408px;width:1px;height:19px;background:#fff;"></div>
<div class="r" style="left:4px;top:408px;width:10px;height:19px;background:#f0f0f0;"></div>
<div class="r" style="left:4px;top:408px;width:10px;height:1px;background:#fff;"></div>
<div class="r" style="left:15px;top:408px;width:99px;height:19px;background:#fffdcb;"></div>
<div class="r" style="left:115px;top:408px;width:178px;height:19px;background:#fffdcb;"></div>
<div class="r" style="left:294px;top:408px;width:119px;height:19px;background:#fffdcb;"></div>
<div class="r" style="left:414px;top:408px;width:194px;height:19px;background:#fffdcb;"></div>
<div class="r" style="left:609px;top:408px;width:148px;height:19px;background:#fffdcb;"></div>
<div class="r" style="left:759px;top:408px;width:2px;height:19px;background:#fffdcb;"></div>
<svg class="r" style="left:58px;top:411px" width="13" height="13" viewBox="0 0 13 13"><rect x="0" y="0" width="13" height="13" fill="#fff"/><path d="M0.5,12.5 V0.5 H12.5" stroke="#a0a0a0" fill="none"/><path d="M3.3,5.6 L5.7,8.7 L9.9,3.3" stroke="#000" stroke-width="2.2" fill="none"/></svg>
<div class="t" style="left:118px;top:407px;font-size:11px;line-height:20px;color:#000;letter-spacing:-0.35px;">Falkensee, Hermann</div>
<div class="t" style="left:297px;top:407px;font-size:11px;line-height:20px;color:#000;letter-spacing:-0.35px;">Hermann</div>
<div class="t" style="left:417px;top:407px;font-size:11px;line-height:20px;color:#000;letter-spacing:-0.35px;">Falkensee</div>
<div class="r" style="left:3px;top:428px;width:1px;height:19px;background:#fff;"></div>
<div class="r" style="left:4px;top:428px;width:10px;height:19px;background:#f0f0f0;"></div>
<div class="r" style="left:4px;top:428px;width:10px;height:1px;background:#fff;"></div>
<div class="r" style="left:15px;top:428px;width:99px;height:19px;background:#fffdcb;"></div>
<div class="r" style="left:115px;top:428px;width:178px;height:19px;background:#fffdcb;"></div>
<div class="r" style="left:294px;top:428px;width:119px;height:19px;background:#fffdcb;"></div>
<div class="r" style="left:414px;top:428px;width:194px;height:19px;background:#fffdcb;"></div>
<div class="r" style="left:609px;top:428px;width:148px;height:19px;background:#fffdcb;"></div>
<div class="r" style="left:759px;top:428px;width:2px;height:19px;background:#fffdcb;"></div>
<svg class="r" style="left:58px;top:431px" width="13" height="13" viewBox="0 0 13 13"><rect x="0" y="0" width="13" height="13" fill="#fff"/><path d="M0.5,12.5 V0.5 H12.5" stroke="#a0a0a0" fill="none"/><path d="M3.3,5.6 L5.7,8.7 L9.9,3.3" stroke="#000" stroke-width="2.2" fill="none"/></svg>
<div class="t" style="left:118px;top:427px;font-size:11px;line-height:20px;color:#000;letter-spacing:-0.35px;">Bornhof</div>
<div class="t" style="left:297px;top:427px;font-size:11px;line-height:20px;color:#000;letter-spacing:-0.35px;"></div>
<div class="t" style="left:417px;top:427px;font-size:11px;line-height:20px;color:#000;letter-spacing:-0.35px;">Bornhof</div>
<div class="r" style="left:3px;top:448px;width:1px;height:19px;background:#fff;"></div>
<div class="r" style="left:4px;top:448px;width:10px;height:19px;background:#f0f0f0;"></div>
<div class="r" style="left:4px;top:448px;width:10px;height:1px;background:#fff;"></div>
<div class="r" style="left:15px;top:448px;width:99px;height:19px;background:#fffdcb;"></div>
<div class="r" style="left:115px;top:448px;width:178px;height:19px;background:#fffdcb;"></div>
<div class="r" style="left:294px;top:448px;width:119px;height:19px;background:#fffdcb;"></div>
<div class="r" style="left:414px;top:448px;width:194px;height:19px;background:#fffdcb;"></div>
<div class="r" style="left:609px;top:448px;width:148px;height:19px;background:#fffdcb;"></div>
<div class="r" style="left:759px;top:448px;width:2px;height:19px;background:#fffdcb;"></div>
<svg class="r" style="left:58px;top:451px" width="13" height="13" viewBox="0 0 13 13"><rect x="0" y="0" width="13" height="13" fill="#fff"/><path d="M0.5,12.5 V0.5 H12.5" stroke="#a0a0a0" fill="none"/><path d="M3.3,5.6 L5.7,8.7 L9.9,3.3" stroke="#000" stroke-width="2.2" fill="none"/></svg>
<div class="t" style="left:118px;top:447px;font-size:11px;line-height:20px;color:#000;letter-spacing:-0.35px;">Heil Maren</div>
<div class="t" style="left:297px;top:447px;font-size:11px;line-height:20px;color:#000;letter-spacing:-0.35px;">Maren</div>
<div class="t" style="left:417px;top:447px;font-size:11px;line-height:20px;color:#000;letter-spacing:-0.35px;">Heil</div>
<div class="r" style="left:3px;top:468px;width:1px;height:19px;background:#fff;"></div>
<div class="r" style="left:4px;top:468px;width:10px;height:19px;background:#f0f0f0;"></div>
<div class="r" style="left:4px;top:468px;width:10px;height:1px;background:#fff;"></div>
<div class="r" style="left:15px;top:468px;width:99px;height:19px;background:#fffdcb;"></div>
<div class="r" style="left:115px;top:468px;width:178px;height:19px;background:#fffdcb;"></div>
<div class="r" style="left:294px;top:468px;width:119px;height:19px;background:#fffdcb;"></div>
<div class="r" style="left:414px;top:468px;width:194px;height:19px;background:#fffdcb;"></div>
<div class="r" style="left:609px;top:468px;width:148px;height:19px;background:#fffdcb;"></div>
<div class="r" style="left:759px;top:468px;width:2px;height:19px;background:#fffdcb;"></div>
<svg class="r" style="left:58px;top:471px" width="13" height="13" viewBox="0 0 13 13"><rect x="0" y="0" width="13" height="13" fill="#fff"/><path d="M0.5,12.5 V0.5 H12.5" stroke="#a0a0a0" fill="none"/><path d="M3.3,5.6 L5.7,8.7 L9.9,3.3" stroke="#000" stroke-width="2.2" fill="none"/></svg>
<div class="t" style="left:118px;top:467px;font-size:11px;line-height:20px;color:#000;letter-spacing:-0.35px;">Ablage</div>
<div class="t" style="left:297px;top:467px;font-size:11px;line-height:20px;color:#000;letter-spacing:-0.35px;"></div>
<div class="t" style="left:417px;top:467px;font-size:11px;line-height:20px;color:#000;letter-spacing:-0.35px;">Ablage</div>
<div class="r" style="left:3px;top:488px;width:1px;height:19px;background:#fff;"></div>
<div class="r" style="left:4px;top:488px;width:10px;height:19px;background:#f0f0f0;"></div>
<div class="r" style="left:4px;top:488px;width:10px;height:1px;background:#fff;"></div>
<div class="r" style="left:15px;top:488px;width:99px;height:19px;background:#fffdcb;"></div>
<div class="r" style="left:115px;top:488px;width:178px;height:19px;background:#fffdcb;"></div>
<div class="r" style="left:294px;top:488px;width:119px;height:19px;background:#fffdcb;"></div>
<div class="r" style="left:414px;top:488px;width:194px;height:19px;background:#fffdcb;"></div>
<div class="r" style="left:609px;top:488px;width:148px;height:19px;background:#fffdcb;"></div>
<div class="r" style="left:759px;top:488px;width:2px;height:19px;background:#fffdcb;"></div>
<svg class="r" style="left:58px;top:491px" width="13" height="13" viewBox="0 0 13 13"><rect x="0" y="0" width="13" height="13" fill="#fff"/><path d="M0.5,12.5 V0.5 H12.5" stroke="#a0a0a0" fill="none"/><path d="M3.3,5.6 L5.7,8.7 L9.9,3.3" stroke="#000" stroke-width="2.2" fill="none"/></svg>
<div class="t" style="left:118px;top:487px;font-size:11px;line-height:20px;color:#000;letter-spacing:-0.35px;">Gause, Gundula</div>
<div class="t" style="left:297px;top:487px;font-size:11px;line-height:20px;color:#000;letter-spacing:-0.35px;">Gundula</div>
<div class="t" style="left:417px;top:487px;font-size:11px;line-height:20px;color:#000;letter-spacing:-0.35px;">Gause</div>
<div class="r" style="left:3px;top:508px;width:1px;height:19px;background:#fff;"></div>
<div class="r" style="left:4px;top:508px;width:10px;height:19px;background:#f0f0f0;"></div>
<div class="r" style="left:4px;top:508px;width:10px;height:1px;background:#fff;"></div>
<div class="r" style="left:15px;top:508px;width:99px;height:19px;background:#fffdcb;"></div>
<div class="r" style="left:115px;top:508px;width:178px;height:19px;background:#fffdcb;"></div>
<div class="r" style="left:294px;top:508px;width:119px;height:19px;background:#fffdcb;"></div>
<div class="r" style="left:414px;top:508px;width:194px;height:19px;background:#fffdcb;"></div>
<div class="r" style="left:609px;top:508px;width:148px;height:19px;background:#fffdcb;"></div>
<div class="r" style="left:759px;top:508px;width:2px;height:19px;background:#fffdcb;"></div>
<svg class="r" style="left:58px;top:511px" width="13" height="13" viewBox="0 0 13 13"><rect x="0" y="0" width="13" height="13" fill="#fff"/><path d="M0.5,12.5 V0.5 H12.5" stroke="#a0a0a0" fill="none"/><path d="M3.3,5.6 L5.7,8.7 L9.9,3.3" stroke="#000" stroke-width="2.2" fill="none"/></svg>
<div class="t" style="left:118px;top:507px;font-size:11px;line-height:20px;color:#000;letter-spacing:-0.35px;">Dieck Bernhard</div>
<div class="t" style="left:297px;top:507px;font-size:11px;line-height:20px;color:#000;letter-spacing:-0.35px;">Bernhard</div>
<div class="t" style="left:417px;top:507px;font-size:11px;line-height:20px;color:#000;letter-spacing:-0.35px;">Dieck</div>
<div class="r" style="left:3px;top:528px;width:1px;height:19px;background:#fff;"></div>
<div class="r" style="left:4px;top:528px;width:10px;height:19px;background:#f0f0f0;"></div>
<div class="r" style="left:4px;top:528px;width:10px;height:1px;background:#fff;"></div>
<div class="r" style="left:15px;top:528px;width:99px;height:19px;background:#fffdcb;"></div>
<div class="r" style="left:115px;top:528px;width:178px;height:19px;background:#fffdcb;"></div>
<div class="r" style="left:294px;top:528px;width:119px;height:19px;background:#fffdcb;"></div>
<div class="r" style="left:414px;top:528px;width:194px;height:19px;background:#fffdcb;"></div>
<div class="r" style="left:609px;top:528px;width:148px;height:19px;background:#fffdcb;"></div>
<div class="r" style="left:759px;top:528px;width:2px;height:19px;background:#fffdcb;"></div>
<svg class="r" style="left:58px;top:531px" width="13" height="13" viewBox="0 0 13 13"><rect x="0" y="0" width="13" height="13" fill="#fff"/><path d="M0.5,12.5 V0.5 H12.5" stroke="#a0a0a0" fill="none"/><path d="M3.3,5.6 L5.7,8.7 L9.9,3.3" stroke="#000" stroke-width="2.2" fill="none"/></svg>
<div class="t" style="left:118px;top:527px;font-size:11px;line-height:20px;color:#000;letter-spacing:-0.35px;">Biogasanlage Nord</div>
<div class="t" style="left:297px;top:527px;font-size:11px;line-height:20px;color:#000;letter-spacing:-0.35px;"></div>
<div class="t" style="left:417px;top:527px;font-size:11px;line-height:20px;color:#000;letter-spacing:-0.35px;">Biogasanlage Nord</div>
<div class="r" style="left:158px;top:176px;width:398px;height:174px;background:#f2f2f2;border:1px solid #cccccc;box-sizing:border-box;box-shadow:4px 3px 2px -1px rgba(0,0,0,0.38)"></div>
<div class="r" style="left:161px;top:179px;width:393px;height:22px;background:#91c9f7;"></div>
<div class="r" style="left:189px;top:204px;width:364px;height:1px;background:#d7d7d7;"></div>
<div class="r" style="left:189px;top:299px;width:364px;height:1px;background:#d7d7d7;"></div>
<div class="t" style="left:193px;top:179px;font-size:11.8px;line-height:22px;color:#000;letter-spacing:0px;">Adressart setzen</div>
<div class="t" style="left:193px;top:208px;font-size:11.8px;line-height:22px;color:#6d6d6d;letter-spacing:0px;">Wert kopieren</div>
<div class="t" style="left:527px;top:208px;font-size:11.8px;line-height:22px;color:#6d6d6d;letter-spacing:0px;">F3</div>
<div class="t" style="left:193px;top:230px;font-size:11.8px;line-height:22px;color:#6d6d6d;letter-spacing:0px;">kopierten Wert in selektierte Zeile einfügen</div>
<div class="t" style="left:527px;top:230px;font-size:11.8px;line-height:22px;color:#6d6d6d;letter-spacing:0px;">F4</div>
<div class="t" style="left:193px;top:252px;font-size:11.8px;line-height:22px;color:#6d6d6d;letter-spacing:0px;">Wert der aktuellen Zeile in alle Zeilen einfügen</div>
<div class="t" style="left:527px;top:252px;font-size:11.8px;line-height:22px;color:#6d6d6d;letter-spacing:0px;">F5</div>
<div class="t" style="left:193px;top:274px;font-size:11.8px;line-height:22px;color:#6d6d6d;letter-spacing:0px;">Wert der aktuellen Zeile in alle folgenden Zeilen einfügen</div>
<div class="t" style="left:527px;top:274px;font-size:11.8px;line-height:22px;color:#6d6d6d;letter-spacing:0px;">F6</div>
<div class="t" style="left:193px;top:303px;font-size:11.8px;line-height:22px;color:#000;letter-spacing:0px;">Kundenumsätze</div>
<div class="t" style="left:527px;top:303px;font-size:11.8px;line-height:22px;color:#000;letter-spacing:0px;">F7</div>
<div class="t" style="left:193px;top:325px;font-size:11.8px;line-height:22px;color:#6d6d6d;letter-spacing:0px;">SEPA-Mandat drucken</div>
<svg class="r" style="left:543px;top:185px" width="6" height="10" viewBox="0 0 6 10"><path d="M1.2,1 L4.7,4.4 L1.2,7.8" stroke="#333" fill="none" stroke-width="1.1"/></svg>
<div class="r" style="left:554px;top:176px;width:205px;height:314px;background:#f2f2f2;border:1px solid #cccccc;box-sizing:border-box;box-shadow:4px 3px 2px -1px rgba(0,0,0,0.38)"></div>
<div class="r" style="left:557px;top:443px;width:199px;height:22px;background:#91c9f7;"></div>
<div class="t" style="left:589px;top:179px;font-size:11.8px;line-height:22px;color:#000;letter-spacing:0px;">Besamungstechniker</div>
<div class="t" style="left:589px;top:201px;font-size:11.8px;line-height:22px;color:#000;letter-spacing:0px;">Biogasanlage</div>
<div class="t" style="left:589px;top:223px;font-size:11.8px;line-height:22px;color:#000;letter-spacing:0px;">Eigentümer (Flt.)</div>
<div class="t" style="left:589px;top:245px;font-size:11.8px;line-height:22px;color:#000;letter-spacing:0px;">Finanzamt</div>
<div class="t" style="left:589px;top:267px;font-size:11.8px;line-height:22px;color:#000;letter-spacing:0px;">Kunde/Auftraggeber</div>
<div class="t" style="left:589px;top:289px;font-size:11.8px;line-height:22px;color:#000;letter-spacing:0px;">Lieferadresse</div>
<div class="t" style="left:589px;top:311px;font-size:11.8px;line-height:22px;color:#000;letter-spacing:0px;">Lieferant</div>
<div class="t" style="left:589px;top:333px;font-size:11.8px;line-height:22px;color:#000;letter-spacing:0px;">Lohnunternehmer</div>
<div class="t" style="left:589px;top:355px;font-size:11.8px;line-height:22px;color:#000;letter-spacing:0px;">Mitarbeiter</div>
<div class="t" style="left:589px;top:377px;font-size:11.8px;line-height:22px;color:#000;letter-spacing:0px;">Rechnungsadresse</div>
<div class="t" style="left:589px;top:399px;font-size:11.8px;line-height:22px;color:#000;letter-spacing:0px;">Tierarzt</div>
<div class="t" style="left:589px;top:421px;font-size:11.8px;line-height:22px;color:#000;letter-spacing:0px;">Unternehmen/Betrieb</div>
<div class="t" style="left:589px;top:443px;font-size:11.8px;line-height:22px;color:#000;letter-spacing:0px;">Vertragspartner (PV)</div>
<div class="t" style="left:589px;top:465px;font-size:11.8px;line-height:22px;color:#000;letter-spacing:0px;">Weitere ...</div>
<svg class="r" style="left:742px;top:471px" width="6" height="10" viewBox="0 0 6 10"><path d="M1.2,1 L4.7,4.4 L1.2,7.8" stroke="#333" fill="none" stroke-width="1.1"/></svg>
</body></html>
